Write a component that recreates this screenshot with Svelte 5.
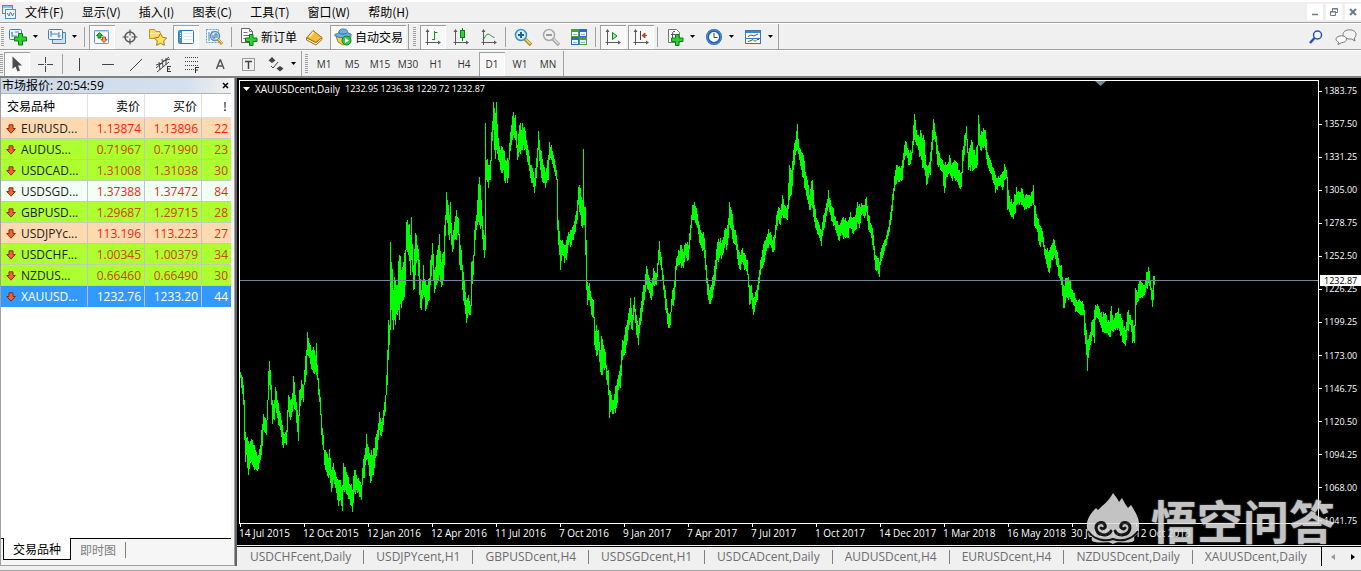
<script>
  const menus = ['文件(F)', '显示(V)', '插入(I)', '图表(C)', '工具(T)', '窗口(W)', '帮助(H)'];
  const periods = ['M1', 'M5', 'M15', 'M30', 'H1', 'H4', 'D1', 'W1', 'MN'];
  const lineTools = [
    ['vline', '垂直线'], ['hline', '水平线'], ['trend', '趋势线'], ['channel', '等距通道'],
    ['fibo', '斐波纳契'], ['text', '文字'], ['label', '文字标签']
  ];
  const quotes = [
    ['EURUSD...', '1.13874', '1.13896', '22', 'peach'],
    ['AUDUS...', '0.71967', '0.71990', '23', 'lime'],
    ['USDCAD...', '1.31008', '1.31038', '30', 'lime'],
    ['USDSGD...', '1.37388', '1.37472', '84', 'mint'],
    ['GBPUSD...', '1.29687', '1.29715', '28', 'lime'],
    ['USDJPYc...', '113.196', '113.223', '27', 'peach'],
    ['USDCHF...', '1.00345', '1.00379', '34', 'lime'],
    ['NZDUS...', '0.66460', '0.66490', '30', 'lime'],
    ['XAUUSD...', '1232.76', '1233.20', '44', 'selected']
  ];
  const prices = ['1383.75', '1357.50', '1331.25', '1305.00', '1278.75', '1252.50', '1226.25',
    '1199.25', '1173.00', '1146.75', '1120.50', '1094.25', '1068.00', '1041.75'];
  const dates = ['14 Jul 2015', '12 Oct 2015', '12 Jan 2016', '12 Apr 2016', '11 Jul 2016',
    '7 Oct 2016', '9 Jan 2017', '7 Apr 2017', '7 Jul 2017', '1 Oct 2017', '14 Dec 2017',
    '1 Mar 2018', '16 May 2018', '30 Jul 2018', '12 Oct 2018'];
  const charts = ['USDCHFcent,Daily', 'USDJPYcent,H1', 'GBPUSDcent,H4', 'USDSGDcent,H1',
    'USDCADcent,Daily', 'AUDUSDcent,H4', 'EURUSDcent,H4', 'NZDUSDcent,Daily', 'XAUUSDcent,Daily'];

  // Swing anchors: bar position, high, low. Bars between anchors are filled in.
  const swings = `240 372 378,241 375 388,243 385 405,244 400 440,245 432 462,246 438 455,248 441 475,250 441 463,252 440 465,254 445 470,256 452 470,258 455 469,260 445 460,261 430 455,263 414 430,265 418 433,266 420 435,267 400 420,268 371 400,269 361 385,270 370 390,271 385 405,272 400 424,274 400 420,275 387 408,277 400 418,278 403 425,280 413 430,282 425 445,283 432 448,285 432 443,286 430 445,287 410 432,288 395 412,290 400 420,292 393 412,293 376 405,295 395 410,297 410 432,298 415 441,299 390 412,301 380 400,303 385 402,304 370 385,306 350 375,307 332 355,309 343 358,312 350 370,313 347 373,315 355 372,316 343 375,317 365 380,318 378 395,320 397 415,321 420 435,323 435 450,324 450 465,326 452 472,328 458 478,329 449 475,331 470 492,333 463 480,335 472 488,338 480 506,340 480 500,342 485 511,343 463 490,345 467 490,347 475 495,350 485 505,352 490 512,354 470 492,356 475 490,358 478 492,361 485 500,362 468 485,364 455 478,366 434 460,368 447 465,370 455 483,372 455 475,374 448 468,375 437 458,377 430 450,379 412 430,381 422 436,383 410 425,385 395 412,386 375 395,387 350 385,388 320 360,389 325 345,390 242 330,391 262 310,393 290 330,395 280 325,397 285 315,399 255 320,401 270 308,403 262 300,405 250 285,406 222 250,408 225 255,410 235 275,411 217 260,413 265 290,415 233 275,417 245 260,419 260 295,421 290 310,423 265 295,425 280 311,427 285 305,429 278 300,430 260 285,432 243 265,434 270 293,437 250 283,439 234 275,441 262 287,443 252 280,444 225 265,446 192 220,448 205 235,449 215 240,450 202 233,452 235 252,454 222 240,456 210 240,458 218 235,459 240 265,461 250 270,462 265 290,464 280 305,466 300 323,468 295 313,470 305 315,471 262 285,473 255 275,474 230 250,476 215 230,477 200 225,479 177 225,481 200 226,483 230 250,484 235 258,485 123 250,486 160 180,488 165 188,490 160 180,491 132 155,493 102 130,494 108 150,496 102 150,498 138 160,500 150 170,503 150 170,505 160 183,508 160 178,509 143 160,511 125 145,513 112 135,515 115 140,517 145 160,519 125 152,521 130 150,522 123 150,524 127 150,526 140 155,528 150 165,530 165 178,532 168 183,534 178 193,536 158 178,538 131 150,540 150 170,543 165 183,545 172 188,548 155 180,549 142 160,551 145 160,553 155 168,556 170 180,557 183 230,558 220 245,560 240 270,562 240 255,564 245 263,566 240 260,568 232 245,571 230 245,573 225 240,575 215 232,577 200 220,578 187 205,580 188 215,582 200 228,583 149 225,584 207 225,585 207 255,586 240 290,587 282 305,589 283 300,591 297 315,593 300 318,594 330 345,596 325 356,598 330 350,600 350 372,601 336 375,603 345 368,605 352 368,606 365 380,608 370 395,609 390 418,611 395 410,613 400 414,616 385 408,618 375 390,620 365 388,622 340 360,624 335 355,626 325 345,628 313 330,630 298 322,632 315 330,634 297 312,636 315 335,638 325 345,640 308 325,642 292 312,644 285 300,646 266 285,648 275 290,651 283 300,653 268 285,656 273 285,658 250 265,659 241 260,661 257 270,663 275 290,665 290 310,668 313 328,670 312 325,672 290 305,674 280 300,676 258 270,678 250 265,680 245 263,683 252 268,685 243 255,688 245 260,690 225 240,692 205 220,694 202 220,696 208 225,699 225 243,701 233 248,703 232 250,705 250 270,707 278 295,709 290 304,711 285 300,713 275 290,715 260 280,717 242 260,719 242 258,722 240 255,724 230 248,727 225 245,729 202 225,731 210 230,733 225 243,736 235 250,738 250 265,740 255 270,742 248 262,744 253 270,747 260 275,749 285 305,751 285 300,753 298 315,755 292 305,757 285 300,758 277 290,760 260 275,762 250 268,765 240 255,768 229 248,770 232 245,772 240 252,774 235 250,776 215 230,778 207 220,780 210 225,782 195 215,784 205 218,787 205 220,789 165 200,791 170 195,793 150 170,795 140 155,797 124 150,799 148 160,801 152 170,803 155 178,805 172 190,807 180 200,809 195 210,812 180 208,814 205 222,816 218 230,818 222 235,821 230 246,823 215 230,825 208 222,828 190 207,830 200 215,832 207 222,835 217 230,838 225 240,842 218 235,845 218 238,847 222 238,850 212 228,852 218 233,855 215 230,857 202 222,859 204 228,861 203 215,864 205 218,866 197 212,868 215 230,871 225 238,873 235 250,875 255 270,877 258 270,879 262 277,880 252 265,882 245 258,886 235 245,889 220 232,891 205 220,893 188 200,895 170 185,897 165 180,900 168 180,902 160 180,904 145 160,906 142 155,908 150 165,911 152 160,913 125 145,914 114 140,916 130 145,918 135 150,921 133 160,924 140 170,926 165 185,928 165 178,930 152 175,932 130 150,933 119 140,935 132 142,937 145 165,940 158 170,942 160 172,944 165 193,946 165 177,949 155 173,951 165 178,954 160 178,956 162 180,958 170 185,961 172 187,962 150 170,964 135 155,966 126 140,968 155 170,971 140 165,973 150 170,975 155 168,977 145 165,978 115 145,980 135 150,983 128 148,985 130 150,987 152 165,990 160 173,993 168 183,995 175 193,997 178 190,1000 175 185,1002 172 190,1004 164 180,1006 170 178,1007 180 210,1010 202 215,1013 202 219,1016 187 205,1019 192 205,1021 188 205,1024 198 210,1027 195 207,1030 196 206,1033 185 205,1034 205 226,1037 218 232,1039 225 245,1042 231 242,1044 245 255,1046 250 264,1049 250 273,1051 245 260,1054 240 255,1056 250 265,1059 265 278,1061 265 285,1063 285 308,1066 278 297,1069 280 297,1072 290 302,1075 298 312,1078 300 313,1081 302 315,1083 304 315,1084 310 335,1086 330 355,1087 340 371,1089 335 350,1092 320 335,1094 310 343,1095 305 320,1097 304 318,1100 313 325,1102 317 332,1105 313 333,1107 322 333,1109 322 337,1111 306 330,1113 320 332,1115 313 330,1118 308 328,1121 318 335,1123 328 343,1125 330 346,1127 312 330,1130 315 325,1132 320 343,1134 325 343,1135 288 310,1137 292 302,1139 281 298,1142 283 298,1144 285 295,1146 272 288,1148 267 283,1150 280 290,1152 290 307,1153 276 300,1154 276 285`
    .split(',').map((row) => row.split(' ').map(Number));

  const left = 240;
  const top = 81;

  function buildBars() {
    const parts = [];
    let seed = 7;
    const rand = () => ((seed = (seed * 16807) % 2147483647) / 2147483647);
    let prev = null;
    const push = (x, hi, lo) => {
      if (prev) {
        if (hi > prev[1]) hi = prev[1] - 1;
        if (lo < prev[0]) lo = prev[0] + 1;
      }
      prev = [hi, lo];
      parts.push(`M${x - left + 0.5} ${Math.round(hi - top)}V${Math.round(lo - top)}`);
    };
    swings.forEach(([x, hi, lo], i) => {
      push(x, hi, lo);
      const next = swings[i + 1];
      if (!next) return;
      for (let bx = x + 1; bx < next[0]; bx++) {
        const t = (bx - x) / (next[0] - x);
        const h = hi + (next[1] - hi) * t;
        const l = lo + (next[2] - lo) * t;
        const span = l - h;
        push(bx, h + (rand() * 0.4 - 0.2) * span, l - (rand() * 0.4 - 0.2) * span);
      }
    });
    return parts.join('');
  }
  const bars = buildBars();
</script>

{#snippet icon(name)}
  <svg class="icon" viewBox="0 0 20 20" width="20" height="20" fill="none" aria-hidden="true">
    {#if name === 'new'}
      <rect x="1.5" y="2.5" width="12" height="10" rx="1" fill="#eef6fd" stroke="#3d7fb5" />
      <path d="M4 5v5M3 6h2M7 5h4M4 9h5" stroke="#4c87b9" />
      <path d="M10.5 6.500h4v3.500h4v4h-4v4h-4v-4h-4v-4h4z" fill="#2fd02f" stroke="#0c7d16" />
    {:else if name === 'profiles'}
      <path d="M5.500 5.500h13v11h-13z" fill="#cfe2f3" stroke="#4a86b8" />
      <rect x="1.500" y="2.500" width="14" height="10" rx="1" fill="#eef6fd" stroke="#3d7fb5" />
      <path d="M4 4v6M4 7h8M12 5v6M3 5h2M10.500 9h3" stroke="#4c87b9" />
    {:else if name === 'watch'}
      <rect x="2.500" y="3.500" width="14" height="13" rx="1" fill="#f7fbff" stroke="#5d9fd0" />
      <path d="M2 4h15" stroke="#78b5e0" />
      <path d="M7.500 5.500l3 3h-1.500v2.500h-3v-2.500h-1.500z" fill="#2fc32f" stroke="#0c7d16" />
      <path d="M12 15.500l-3-3h1.500v-2.500h3v2.500h1.500z" fill="#ff9a6c" stroke="#d24313" />
    {:else if name === 'cross'}
      <circle cx="10" cy="10" r="5" stroke="#555" stroke-width="1.500" />
      <path d="M10 2.500v6M10 11.500v6M2.500 10h6M11.500 10h6" stroke="#555" stroke-width="1.200" />
    {:else if name === 'navigator'}
      <path d="M1.500 11.500v-9h5l1.500 2h4v7z" fill="#f8dc73" stroke="#b9932a" />
      <path d="M2 6.500h10" stroke="#fff1ae" />
      <path d="M12.500 6.500l2 3.800 4.200.7-3 3 .7 4.300-3.900-2-3.900 2 .7-4.300-3-3 4.200-.7z" fill="#ffe15a" stroke="#a77c13" />
    {:else if name === 'terminal'}
      <rect x="2.500" y="3.500" width="15" height="13" rx="1" fill="#fafdff" stroke="#2f78b8" />
      <path d="M3 4h3v12h-3z" fill="#4b93cd" />
      <path d="M4 6.500h1M4 8.500h1M4 10.500h1" stroke="#fff" />
      <path d="M8 6.500h8M8 9.500h8M8 12.500h8" stroke="#dce8f1" />
    {:else if name === 'tester'}
      <path d="M2.500 2.500h12v13h-12z" fill="#eef6fd" stroke="#6a9dc7" stroke-dasharray="2 1" />
      <path d="M5 5v9M8 4v8M11 6v7" stroke="#4c87b9" />
      <circle cx="11" cy="9" r="4.500" fill="#d4e9f8" fill-opacity=".8" stroke="#5793bd" stroke-width="1.500" />
      <path d="M9 8v3h2v-4h2v4" stroke="#3e78ab" />
      <path d="M14 12.500l4 4.500" stroke="#c99b23" stroke-width="3" />
      <path d="M14 12l4 4" stroke="#f7d765" />
    {:else if name === 'order'}
      <path d="M2.500 1.500h8l3 3v11h-11z" fill="#fff" stroke="#666" />
      <path d="M10.500 1.500v3h3M4.500 5.500h4M4.500 8.500h6M4.500 11.500h4" stroke="#777" />
      <path d="M10.500 7.500h3.500v3.500h4v3.500h-4v4h-3.500v-4h-4v-3.500h4z" fill="#2fd02f" stroke="#0c7d16" />
    {:else if name === 'book'}
      <path d="M1.500 11l6.500-7.500 9 7-6 5z" fill="#f0bd3a" stroke="#a3701a" />
      <path d="M1.500 11v2l9.500 5 6-5.500v-2l-6 5z" fill="#fff0bf" stroke="#a3701a" />
      <path d="M4.500 10l4-5" stroke="#ffe99a" stroke-width="2" />
    {:else if name === 'auto'}
      <path d="M3 9l2 6 5 3 7-3 1-6z" fill="#f3ce4f" stroke="#ab8424" />
      <path d="M1.500 8c1-1.500 3-1 4-2 .5-3 2-4 5-4s4 1.500 4.500 4c1 .5 3 .5 3.500 2-2 3-14 4-17 0z" fill="#6db1e3" stroke="#3479ad" />
      <path d="M6 6c2 1.500 6 1.500 8 0" stroke="#2b6b9e" />
      <circle cx="13.500" cy="13.500" r="4.500" fill="#3cc342" stroke="#14801d" />
      <path d="M12 11l4 2.500-4 2.500z" fill="#fff" />
    {:else if name === 'bar' || name === 'candle' || name === 'line' || name === 'scroll' || name === 'shift'}
      <path d="M4.500 18v-14M2.500 15.500h14" stroke="#5b5b5b" />
      <path d="M4.500 2l2 3h-4zM18 15.500l-3-2v4z" fill="#5b5b5b" />
      {#if name === 'bar'}
        <path d="M11.500 4v9M12 5.500h2.500M9 12.500h2.500" stroke="#179027" />
      {:else if name === 'candle'}
        <path d="M11.500 1v13" stroke="#107c1c" />
        <rect x="9.500" y="3.500" width="4" height="7" fill="#29d63c" stroke="#107c1c" />
      {:else if name === 'line'}
        <path d="M4 12.500c2-1 2.500-5.500 5-5.500 2 0 3 2.500 6.500 3.500" stroke="#26923a" />
      {:else if name === 'scroll'}
        <path d="M9.500 5.500l4.500 3.500-4.500 3.500z" fill="#9be8a4" stroke="#138224" />
      {:else}
        <path d="M9.500 4v9" stroke="#444" />
        <path d="M11 8.500h5M14 6l-3 2.500 3 2.500z" fill="#b3482b" stroke="#b3482b" />
      {/if}
    {:else if name === 'zoomin' || name === 'zoomout'}
      {@const on = name === 'zoomin'}
      <path d="M12 12l6 6" stroke={on ? '#b58a1a' : '#a5a5a5'} stroke-width="3.500" />
      <path d="M12.500 12l5 5" stroke={on ? '#f7da62' : '#dedede'} stroke-width="1.500" />
      <circle cx="8" cy="8" r="5.500" fill={on ? '#d7efff' : '#f1f1f1'} stroke={on ? '#3a8fce' : '#aaa'} stroke-width="1.500" />
      <path d="M5 8h6" stroke={on ? '#1b63a8' : '#999'} stroke-width="2" />
      {#if on}<path d="M8 5v6" stroke="#1b63a8" stroke-width="2" />{/if}
    {:else if name === 'tile'}
      <path d="M2 2h8v8h-8zM10 10h8v8h-8z" fill="#4aa52c" />
      <path d="M10 2h8v8h-8zM2 10h8v8h-8z" fill="#2f67cc" />
      <path d="M3 5h6v4h-6zM11 5h6v4h-6zM3 13h6v4h-6zM11 13h6v4h-6z" fill="#eff8ff" />
      <path d="M4 7.500h4M12 7.500h4M4 15.500h4M12 15.500h4" stroke="#86b6d8" />
    {:else if name === 'indicator'}
      <path d="M3.500 2.500h8l3 3v10h-11z" fill="#fff" stroke="#777" />
      <path d="M10 4.500c-2-.5-2.500 1-2.500 3v5M6 7.500h4" stroke="#555" />
      <path d="M10.500 7.500h3.500v3.500h4v3.500h-4v4h-3.500v-4h-4v-3.500h4z" fill="#2fd02f" stroke="#0c7d16" />
    {:else if name === 'clock'}
      <circle cx="10" cy="10" r="6.500" fill="#f5faff" stroke="#1b5fae" stroke-width="3" />
      <circle cx="10" cy="10" r="7" stroke="#4f98dc" />
      <path d="M10 6v4.500h3.500" stroke="#444" />
    {:else if name === 'template'}
      <rect x="2.500" y="3.500" width="15" height="13" fill="#f8fcff" stroke="#3878b0" />
      <path d="M3 5h14" stroke="#3f87c4" stroke-width="2" />
      <path d="M3 11.500h14" stroke="#3878b0" />
      <path d="M5 9.500l3-1.500 3 1 4-2M5 14.500l3-1 2-1 2 2 2-2h2" stroke="#3d6b42" />
    {:else if name === 'pointer'}
      <path d="M5.500 2.500v12.500l3-2.500 2 5 2.500-1-2-5h4z" fill="#4b4b4b" />
    {:else if name === 'plus'}
      <path d="M10.500 3v6M10.500 12v6M3 10.500h6M12 10.500h6M10 10.500h1" stroke="#444" />
    {:else if name === 'vline'}
      <path d="M9.500 4v13" stroke="#444" />
    {:else if name === 'hline'}
      <path d="M4 10.500h12" stroke="#444" />
    {:else if name === 'trend'}
      <path d="M4 17l12-12" stroke="#444" />
    {:else if name === 'channel'}
      <path d="M2 14l13-11M3 18l12-10M5 8l1 8M8 5l1 8M12 4v7M2 11l6-2M9 7l7-2" stroke="#444" />
      <path d="M13.500 12v6M13 12.500h4M13 15h3M13 17.500h4" stroke="#333" />
    {:else if name === 'fibo'}
      <path d="M3 3.500h14M3 7.500h14M3 11.500h14M3 15.500h9" stroke="#444" stroke-dasharray="1 1" />
      <path d="M13.500 13v6M13 13.500h4M13 16h3" stroke="#333" />
    {:else if name === 'text'}
      <path d="M6.500 15l3.500-9h.5l3.500 9M8 12h5" stroke="#555" stroke-width="1.500" />
    {:else if name === 'label'}
      <rect x="4.500" y="4.500" width="12" height="12" stroke="#444" stroke-dasharray="1 1" />
      <path d="M7 7.500h7M10.500 7v8" stroke="#444" stroke-width="1.500" />
    {:else if name === 'shapes'}
      <path d="M6 3l3.500 3.500-3.500 2.500-3.500-2.500zM14 12l3.500 2.500-3.500 3-3.500-3z" fill="#444" />
      <path d="M5 12l2 2 5-6" stroke="#444" />
    {/if}
  </svg>
{/snippet}

{#snippet tool(name, label, pressed = false)}
  <button class="tool" class:pressed aria-label={label}>{@render icon(name)}</button>
{/snippet}

{#snippet drop(label)}
  <button class="drop" aria-label={label}>
    <svg viewBox="0 0 5 3" width="5" height="3" aria-hidden="true"><path d="M0 0h5l-2.500 3z" fill="#000" /></svg>
  </button>
{/snippet}

<div class="app">
  <header class="menubar">
    <svg class="appicon" viewBox="0 0 14 14" width="14" height="14" fill="none" aria-hidden="true">
      <rect x=".5" y=".5" width="10" height="8" fill="#e5f1fa" stroke="#4d8dbd" />
      <path d="M1 2h9" stroke="#4d8dbd" />
      <rect x="3.500" y="4.500" width="10" height="9" fill="#f5faff" stroke="#4d8dbd" />
      <path d="M5 8l2 3 1.500-4 2 4 1.500-3" stroke="#3c7fb5" />
    </svg>
    <nav>
      {#each menus as m}<button class="menu">{m}</button>{/each}
    </nav>
    <div class="winbtns">
      <button aria-label="最小化"><svg viewBox="0 0 8 8" width="8" height="8"><path d="M1 6.500h6" stroke="#6b7b88" stroke-width="1.500" /></svg></button>
      <button aria-label="还原"><svg viewBox="0 0 8 8" width="8" height="8" fill="none"><path d="M2.500 3v-2.500h5v4h-2M.5 3.500h5v4h-5zM.5 4h5M2.500 1h5" stroke="#6b7b88" /></svg></button>
      <button aria-label="关闭"><svg viewBox="0 0 8 8" width="8" height="8"><path d="M1 1l6 6M7 1l-6 6" stroke="#6b7b88" stroke-width="2" /></svg></button>
    </div>
  </header>

  <div class="toolrow first">
    <div class="bar">
      <i class="grip"></i>
      {@render tool('new', '新图表')}{@render drop('新图表列表')}
      <i class="space"></i>
      {@render tool('profiles', '配置文件')}{@render drop('配置文件列表')}
      <i class="sep"></i>
      <div class="group">
        {@render tool('watch', '市场报价', true)}
        {@render tool('cross', '数据窗口')}
        {@render tool('navigator', '导航')}
        {@render tool('terminal', '终端', true)}
        {@render tool('tester', '策略测试')}
      </div>
      <i class="sep"></i>
      <div class="group">
        <button class="wide">{@render icon('order')}<span>新订单</span></button>
        {@render tool('book', '编辑器')}
        <button class="wide pressed">{@render icon('auto')}<span>自动交易</span></button>
      </div>
    </div>
    <div class="bar">
      <i class="grip"></i>
      <div class="group">
        {@render tool('bar', '柱状图', true)}
        {@render tool('candle', '阴阳烛')}
        {@render tool('line', '折线图')}
      </div>
      <i class="sep"></i>
      <div class="group">
        {@render tool('zoomin', '放大')}
        {@render tool('zoomout', '缩小')}
        {@render tool('tile', '平铺窗口')}
      </div>
      <i class="sep"></i>
      <div class="group">
        {@render tool('scroll', '自动滚动', true)}
        {@render tool('shift', '图表平移', true)}
      </div>
      <i class="sep"></i>
      {@render tool('indicator', '指标')}{@render drop('指标列表')}
      <i class="space"></i>
      {@render tool('clock', '时段')}{@render drop('时段列表')}
      <i class="space"></i>
      {@render tool('template', '模板')}{@render drop('模板列表')}
    </div>
    <div class="right">
      <button aria-label="搜索">
        <svg viewBox="0 0 14 14" width="14" height="14" fill="none"><circle cx="8.500" cy="5" r="4" fill="#f4f9ff" stroke="#2450b8" stroke-width="1.500" /><path d="M5.500 8l-4.500 5" stroke="#2450b8" stroke-width="2.500" /></svg>
      </button>
      <button aria-label="消息">
        <svg viewBox="0 0 22 16" width="22" height="16" fill="none"><path d="M14.500.8c3.800 0 6.500 2 6.500 4.600 0 1.800-.8 2.900-1.800 3.600l.8 3-3.500-2c-5 .4-8.500-1.600-8.500-4.600 0-2.600 2.700-4.600 6.500-4.600z" fill="#f2f2f2" stroke="#777" /><path d="M6.500 6.800c3 0 5 1.400 5 3.400s-2 3.400-5 3.400l-3.500 2 .5-2.500c-1.500-.6-2.500-1.600-2.500-2.900 0-2 2.500-3.400 5.500-3.400z" fill="#f8f8f8" stroke="#777" /></svg>
      </button>
    </div>
  </div>

  <div class="toolrow second">
    <div class="bar">
      <i class="grip"></i>
      <div class="group">
        {@render tool('pointer', '光标', true)}
        {@render tool('plus', '十字线')}
      </div>
      <i class="sep"></i>
      <div class="group">
        {#each lineTools as [name, label]}{@render tool(name, label)}{/each}
        {@render tool('shapes', '箭头')}
      </div>
      {@render drop('箭头列表')}
    </div>
    <div class="bar">
      <i class="grip"></i>
      <div class="group">
        {#each periods as p}<button class="tool period" class:pressed={p === 'D1'}>{p}</button>{/each}
      </div>
    </div>
  </div>

  <main>
    <aside>
      <div class="title"><span>市场报价: 20:54:59</span><button aria-label="关闭市场报价"><svg viewBox="0 0 7 7" width="7" height="7"><path d="M1 1l5 5M6 1l-5 5" stroke="#000" stroke-width="1.500" /></svg></button></div>
      <div class="quotes">
        <table>
          <colgroup><col class="sym" /><col class="num" /><col class="num" /><col /></colgroup>
          <thead><tr><th class="name">交易品种</th><th>卖价</th><th>买价</th><th>!</th></tr></thead>
          <tbody>
            {#each quotes as [sym, bid, ask, spread, tone]}
              <tr class={tone}>
                <td class="name">
                  <div>
                    <svg viewBox="0 0 10 10" width="10" height="10" aria-hidden="true"><path d="M3 .8h4v3.700h2.300l-4.300 4.700-4.300-4.700h2.300z" fill="#f2642c" stroke="#8a2a10" /></svg><span>{sym}</span>
                  </div>
                </td>
                <td>{bid}</td><td>{ask}</td><td>{spread}</td>
              </tr>
            {/each}
          </tbody>
        </table>
      </div>
      <div class="panetabs">
        <button class="active">交易品种</button>
        <button class="idle">即时图</button>
      </div>
    </aside>

    <section>
      <div class="chart">
        <div class="plot">
          <svg class="bars" viewBox="0 0 1078 442" preserveAspectRatio="none" role="img" aria-label="XAUUSDcent Daily">
            <path d={bars} stroke="#00ff00" fill="none" shape-rendering="crispEdges" />
            <path d="M0 199.500H1078" stroke="#778899" shape-rendering="crispEdges" />
            <path d="M855 0h11l-5.500 5z" fill="#778899" />
          </svg>
          <div class="caption">
            <svg viewBox="0 0 7 4" width="7" height="4" aria-hidden="true"><path d="M0 0h7l-3.500 4z" fill="#fff" /></svg>
            <span>XAUUSDcent,Daily</span><span class="small">1232.95 1236.38 1229.72 1232.87</span>
          </div>
        </div>
        <div class="prices small">
          {#each prices as p}<span>{p}</span>{/each}
          <b>1232.87</b>
        </div>
        <div class="dates">
          {#each dates as d}<span>{d}</span>{/each}
        </div>
        <div class="mark">
          <svg viewBox="0 0 54 52" width="54" height="52" aria-hidden="true">
            <path d="M27 0c3 4 5 6 6 9l3-4c2 4 4 7 6 10l3-3c5 8 9 14 8 23 0 4-2 7-5 9 1 3 0 5-3 5-7 2-13-2-18 2-5-4-11 0-18-2-3 0-4-2-3-5-3-2-5-5-5-9-1-8 3-14 9-20l2 2c5-5 11-9 15-17z" fill="#dedede" />
            <path d="M15 35c2 2 5 0 4-3-2-4-9-3-9 3 1 8 12 9 15 3M39 35c-2 2-5 0-4-3 2-4 9-3 9 3-1 8-12 9-15 3" fill="none" stroke="#161616" stroke-width="3" stroke-linecap="round" />
            <path d="M2 38c6 9 17 11 25 8 8 3 19 1 25-8" fill="none" stroke="#161616" stroke-width="2" />
          </svg>
          <span>悟空问答</span>
        </div>
      </div>
      <div class="charttabs">
        <div class="list">
          {#each charts as c}<button>{c}</button>{/each}
        </div>
        <div class="scrollers">
          <button aria-label="向左"><svg viewBox="0 0 4 6" width="4" height="6"><path d="M4 0v6l-4-3z" fill="#999" /></svg></button>
          <button aria-label="向右"><svg viewBox="0 0 4 6" width="4" height="6"><path d="M0 0v6l4-3z" fill="#000" /></svg></button>
        </div>
      </div>
    </section>
  </main>
  <footer></footer>
</div>

<style>
  :global(body) { margin: 0; background: #f0f0f0; }
  .app {
    display: flex; flex-direction: column; height: 100vh; overflow: hidden; box-sizing: border-box;
    border-top: 2px solid #fff; background: #f0f0f0; color: #000;
    font: 12px/16px "Open Sans", "Noto Sans CJK SC", sans-serif;
  }
  button { font: inherit; color: inherit; border: 0; padding: 0; margin: 0; background: none; display: flex; align-items: center; justify-content: center; white-space: nowrap; }
  svg { display: block; flex: none; }

  .menubar { display: flex; align-items: center; height: 20px; padding-left: 2px; border-bottom: 1px solid #a0a0a0; }
  nav { display: flex; flex: 1; gap: 18px; padding-left: 9px; font-family: "Noto Sans CJK SC", sans-serif; }
  .winbtns { display: flex; gap: 3px; }
  .winbtns button { width: 16px; height: 16px; background: #fff; }

  .toolrow { display: flex; box-sizing: border-box; height: 27px; border-top: 1px solid #fff; border-bottom: 1px solid #a0a0a0; }
  .second { height: 28px; border-bottom: 2px solid #808080; }
  .bar { display: flex; align-items: center; padding-right: 2px; border-right: 1px solid #a0a0a0; }
  .grip { width: 3px; height: 20px; margin: 0 1px; background: repeating-linear-gradient(#a0a0a0 0 1px, #f0f0f0 1px 2px); }
  .second .grip { margin: 0 1px 0 0; }
  .bar + .bar .grip { margin: 0 3px; }
  .first .bar + .bar .grip { margin: 0 4px; }
  .sep { width: 1px; height: 20px; margin: 0 4px; background: #a0a0a0; }
  .bar + .bar .sep { margin-left: 3px; }
  .space { width: 3px; }
  .group { display: flex; gap: 2px; }
  .tool { box-sizing: border-box; width: 26px; height: 24px; }
  .drop { width: 12px; height: 24px; margin-left: -2px; }
  .pressed { background: #f8f8f8; box-shadow: inset 1px 1px #a0a0a0, inset -1px -1px #fff; }
  .wide { height: 24px; gap: 2px; padding: 0 3px; font-family: "Noto Sans CJK SC", sans-serif; }
  .period { font-size: 10px; color: #333; }
  .right { display: flex; flex: 1; justify-content: flex-end; align-items: center; gap: 12px; padding-right: 4px; }

  main { display: flex; flex: 1; min-height: 0; }
  aside { display: flex; flex-direction: column; width: 235px; box-sizing: border-box; border-left: 1px solid #a0a0a0; border-right: 1px solid #a0a0a0; border-bottom: 1px solid #a0a0a0; padding-right: 3px; background: #f6f6f6; flex: none; }
  .title { display: flex; justify-content: space-between; align-items: center; height: 15px; padding: 0 2px 0 1px; background: linear-gradient(90deg, #ccd9ea, #d5e0ee 80%, #f0f0f0); border-bottom: 1px solid #b4b4b4; }
  .quotes { flex: 1; background: #fff; min-height: 0; }
  table { width: 100%; table-layout: fixed; border-collapse: separate; border-spacing: 0; }
  .sym { width: 87px; }
  .num { width: 57px; }
  th, td { box-sizing: border-box; padding: 0 3px; text-align: right; border-right: 1px solid #c0c4cc; border-bottom: 1px solid #c3cbbb; }
  th { height: 24px; font: 12px/16px "Noto Sans CJK SC", sans-serif; border-color: #e0e0e0; }
  th:not(.name) { padding-right: 4px; }
  td { height: 21px; padding-top: 2px; line-height: 18px; color: #f01e14; }
  th:last-child, td:last-child { border-right: 0; }
  th.name { text-align: left; padding-left: 6px; }
  td.name { padding: 2px 0 0 5px; color: #222; }
  td.name div { display: flex; align-items: center; gap: 5px; height: 18px; }
  .peach td { background: #ffdab0; }
  .lime td { background: #adff2f; }
  .mint td { background: #f2fff5; }
  .lime td:not(.name) { color: #cc4408; }
  tr.selected td { background: #3399ff; color: #fff; border-bottom-color: #3399ff; }
  .panetabs { display: flex; height: 26px; padding-left: 2px; border-top: 1px solid #000; font-family: "Noto Sans CJK SC", sans-serif; }
  .panetabs button { height: 22px; padding: 0 9px; box-sizing: border-box; }
  .active { margin-top: -1px; background: #fff; border: solid #000; border-width: 0 1px 1px; }
  .panetabs .idle { height: 16px; margin-top: 3px; color: #808080; border-right: 1px solid #808080; }

  section { display: flex; flex-direction: column; flex: 1; min-width: 0; border-left: 2px solid #606468; }
  .chart { position: relative; flex: 1; display: grid; grid-template: 1fr 21px / 1fr 42px; padding: 2px 0 0 2px; background: #000; color: #fff; font-size: 10px; line-height: 14px; min-height: 0; }
  .small { font-size: 9px; }
  .plot { position: relative; border: 1px solid #fff; min-width: 0; min-height: 0; }
  .bars { width: 100%; height: 100%; }
  .caption { position: absolute; left: 3px; top: 1px; display: flex; gap: 5px; align-items: center; }
  .prices { position: relative; display: flex; flex-direction: column; justify-content: space-between; padding-top: 4px; margin-bottom: -4px; }
  .prices span { display: flex; align-items: center; gap: 2px; }
  .prices span::before { content: ""; width: 3px; height: 1px; background: #fff; }
  .prices b { position: absolute; left: 1px; right: 0; top: 195px; padding-left: 4px; height: 11px; line-height: 11px; font-weight: 400; background: #fff; color: #000; }
  .dates { display: flex; grid-column: 1 / 3; line-height: 12px; }
  .dates span { flex: 0 0 64px; white-space: nowrap; }
  .dates span::before { content: ""; display: block; width: 1px; height: 3px; margin-left: 1px; background: #fff; }
  .mark { position: absolute; right: 26px; bottom: 0; display: flex; align-items: center; gap: 11px; height: 52px; color: #dedede; opacity: .88; }
  .mark span { font: 700 46px/52px "Noto Sans CJK SC", sans-serif; text-shadow: 0 0 2px #888; }

  .charttabs { display: flex; height: 19px; margin-top: 1px; border-top: 1px solid #000; }
  .list { display: flex; flex: 1; align-items: center; padding-left: 1px; border-right: 1px solid #000; overflow: hidden; }
  .list button { padding: 0 12px; color: #6d6d6d; height: 14px; border-right: 1px solid #808080; }
  .list button:last-child { border-right: 0; }
  .scrollers { display: flex; gap: 16px; padding: 0 6px 0 9px; }
  footer { height: 4px; border-bottom: 1px solid #a0a0a0; }
</style>
